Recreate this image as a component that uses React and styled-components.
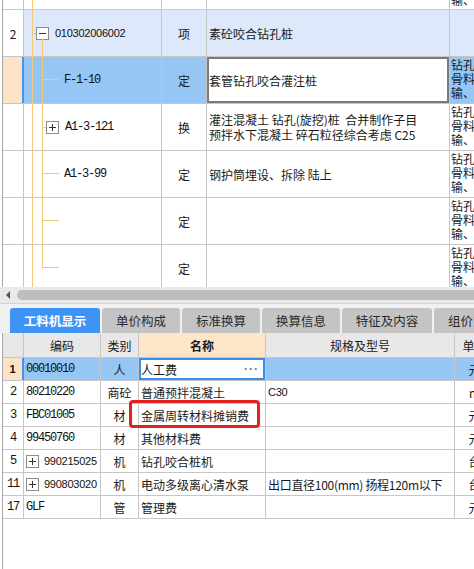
import React from 'react';
import styled, { createGlobalStyle } from 'styled-components';

const GRID = '#c6c6c6';
const SEL = '#96c6f4';
const GROUP = '#dde8fb';
const PEACH = '#fde3c6';
const TREE = '#f6c978';

const GlobalStyle = createGlobalStyle`
  html, body {
    margin: 0;
    padding: 0;
    background: #fff;
    overflow: hidden;
  }
  body {
    font-family: "Noto Sans CJK SC", "Liberation Sans", sans-serif;
    font-size: 12px;
    color: #1a1a1a;
  }
`;

const Page = styled.div`
  width: 474px;
  height: 569px;
  overflow: hidden;
  background: #fff;
`;

const TopGrid = styled.div`
  position: relative;
  height: 287px;
  overflow: hidden;
  margin-left: 2px;
  border-left: 1px solid #a8a8a8;
`;

const TopRow = styled.div`
  display: grid;
  grid-template-columns: 21px 138px 45px 243px 60px;
  height: ${(p) => p.$h}px;
  box-sizing: border-box;
  border-bottom: 1px solid ${GRID};
  background: ${(p) => p.$bg || '#fff'};
`;

const Cell = styled.div`
  box-sizing: border-box;
  border-right: ${(p) => (p.$mark ? `2px solid #4394f0` : `1px solid ${GRID}`)};
  display: flex;
  align-items: center;
  justify-content: ${(p) => p.$align || 'flex-start'};
  padding-left: ${(p) => p.$pad || 0}px;
  overflow: hidden;
  white-space: nowrap;
  letter-spacing: ${(p) => p.$tight || 0}px;
  background: ${(p) => p.$bg || 'transparent'};
  box-shadow: ${(p) => (p.$edit ? `inset 0 0 0 2px ${p.$edit}` : 'none')};
  font-weight: ${(p) => (p.$bold ? 700 : 400)};
`;

const Notes = styled.div`
  box-sizing: border-box;
  padding: ${(p) => (p.$clip ? '0' : '1px')} 0 0 1px;
  line-height: 14px;
  overflow: hidden;
  white-space: nowrap;
  & > div {
    margin-top: ${(p) => (p.$clip ? '-7px' : '0')};
  }
`;

const Wrap = styled.div`
  line-height: 15px;
  white-space: nowrap;
`;

const Code = styled.span`
  font-family: ${(p) => (p.$mono ? '"Liberation Mono", monospace' : '"Liberation Sans", sans-serif')};
  font-size: ${(p) => (p.$mono ? 12 : 11)}px;
  letter-spacing: ${(p) => (p.$mono ? '-1.2px' : '-0.25px')};
  color: #111;
`;

const Toggle = styled.span`
  box-sizing: border-box;
  position: relative;
  flex: none;
  width: 13px;
  height: 13px;
  margin-left: ${(p) => p.$at}px;
  margin-right: ${(p) => p.$gap ?? 6}px;
  border: 1px solid #8c8c8c;
  background: #fff;
  &::before,
  &::after {
    content: '';
    position: absolute;
    background: #333;
  }
  &::before {
    left: 2px;
    right: 2px;
    top: 5px;
    height: 1px;
  }
  &::after {
    display: ${(p) => (p.$plus ? 'block' : 'none')};
    top: 2px;
    bottom: 2px;
    left: 5px;
    width: 1px;
  }
`;

const TreeLines = styled.svg`
  position: absolute;
  left: -3px;
  top: 0;
  pointer-events: none;
`;

const HScroll = styled.div`
  height: 16px;
  display: flex;
  align-items: center;
  background: #e9e9e9;
  border-bottom: 1px solid #d2d2d2;
`;

const Arrow = styled.span`
  width: 0;
  height: 0;
  margin: 0 7px 0 6px;
  border-top: 4px solid transparent;
  border-bottom: 4px solid transparent;
  border-right: 4px solid #555;
`;

const Thumb = styled.div`
  flex: 1;
  height: 10px;
  background: #bdbdbd;
  border-radius: 5px 0 0 5px;
`;

const TabStrip = styled.div`
  display: flex;
  gap: 2px;
  padding: 4px 0 0 10px;
  height: 29px;
  box-sizing: border-box;
  background: #f1f1f1;
  white-space: nowrap;
`;

const Tab = styled.div`
  flex: none;
  width: ${(p) => p.$w}px;
  height: 25px;
  border-radius: 3px 3px 0 0;
  display: flex;
  align-items: center;
  justify-content: center;
  background: ${(p) => (p.$active ? '#3d94f5' : '#c4c4c4')};
  color: ${(p) => (p.$active ? '#fff' : '#2a2a2a')};
  font-weight: ${(p) => (p.$active ? 700 : 400)};
  font-size: 12.5px;
  overflow: hidden;
`;

const BottomGrid = styled.div`
  position: relative;
  height: 236px;
  margin-left: 2px;
  border-left: 1px solid #a8a8a8;
`;

const BRow = styled.div`
  display: grid;
  grid-template-columns: 21px 77px 38px 127px 189px 40px;
  height: ${(p) => (p.$head ? 25 : 23)}px;
  box-sizing: border-box;
  border-bottom: 1px solid ${GRID};
  background: ${(p) => (p.$head ? '#e8e8e8' : '#fff')};
`;

const Dots = styled.span`
  margin-left: auto;
  margin-right: 6px;
  color: #5a7fb0;
  font-family: "Liberation Sans", sans-serif;
  font-weight: 700;
  letter-spacing: 1px;
`;

const Callout = styled.div`
  position: absolute;
  left: 126px;
  top: 67px;
  width: 131px;
  height: 28px;
  box-sizing: border-box;
  border: 3px solid #e3211c;
  border-radius: 4px;
  pointer-events: none;
`;

const notes = ['钻孔咬合桩', '骨料运输', '输、拌和'];

const NoteText = () => (
  <div>
    {notes.map((n) => (
      <div key={n}>{n}</div>
    ))}
  </div>
);

const topRows = [
  { code: 'F-1-10', type: '定', name: '套管钻孔咬合灌注桩', leaf: true, selected: true },
  { code: 'A1-3-121', type: '换', plus: true, name: ['灌注混凝土 钻孔(旋挖)桩\u00a0\u00a0合并制作子目', '预拌水下混凝土 碎石粒径综合考虑 C25'] },
  { code: 'A1-3-99', type: '定', name: '钢护筒埋设、拆除 陆上', leaf: true },
  { code: '', type: '定', leaf: true },
  { code: '', type: '定', leaf: true },
];

const bottomRows = [
  { n: '1', code: '00010010', type: '人', name: '人工费', unit: '元', selected: true },
  { n: '2', code: '80210220', type: '商砼', name: '普通预拌混凝土', spec: 'C30', unit: 'm' },
  { n: '3', code: 'FBC01005', type: '材', name: '金属周转材料摊销费', unit: '元' },
  { n: '4', code: '99450760', type: '材', name: '其他材料费', unit: '元' },
  { n: '5', code: '990215025', plus: true, type: '机', name: '钻孔咬合桩机', unit: '台' },
  { n: '11', code: '990803020', plus: true, type: '机', name: '电动多级离心清水泵', spec: '出口直径100(mm) 扬程120m以下', unit: '台' },
  { n: '17', code: 'GLF', type: '管', name: '管理费', unit: '元' },
];

const tabs = [
  { label: '工料机显示', w: 90, active: true },
  { label: '单价构成', w: 78 },
  { label: '标准换算', w: 78 },
  { label: '换算信息', w: 78 },
  { label: '特征及内容', w: 90 },
  { label: '组价方案', w: 78 },
];

const branchYs = [79.5, 173.5, 220.5, 267.5];

export default function App() {
  return (
    <Page>
      <GlobalStyle />
      <TopGrid>
        <TopRow $h={10}>
          <Cell />
          <Cell />
          <Cell />
          <Cell />
          <Notes $clip>
            <div>
              <div>输、</div>
            </div>
          </Notes>
        </TopRow>
        <TopRow $h={47} $bg={GROUP}>
          <Cell $align="center" $bg="#fff">2</Cell>
          <Cell>
            <Toggle $at={12} />
            <Code>010302006002</Code>
          </Cell>
          <Cell $align="center">项</Cell>
          <Cell $pad={2}>素砼咬合钻孔桩</Cell>
          <Notes />
        </TopRow>
        {topRows.map((r, i) => (
          <TopRow key={i} $h={47} $bg={r.selected ? SEL : '#fff'}>
            <Cell $bg={r.selected ? PEACH : undefined} $mark={r.selected} />
            <Cell $pad={r.leaf ? 40 : 0}>
              {r.plus && <Toggle $at={22} $plus />}
              <Code $mono>{r.code}</Code>
            </Cell>
            <Cell $align="center">{r.type}</Cell>
            <Cell $pad={2} $bg={r.selected ? '#fff' : undefined} $edit={r.selected ? '#7b7b7b' : undefined}>
              {Array.isArray(r.name) ? (
                <Wrap>
                  {r.name.map((l) => (
                    <div key={l}>{l}</div>
                  ))}
                </Wrap>
              ) : (
                r.name
              )}
            </Cell>
            <Notes>
              <NoteText />
            </Notes>
          </TopRow>
        ))}
        <TreeLines width="474" height="287" viewBox="0 0 474 287">
          <g stroke={TREE} strokeWidth="1" fill="none" shapeRendering="crispEdges">
            <line x1="32.5" y1="0" x2="32.5" y2="287" />
            <line x1="32" y1="33.5" x2="36" y2="33.5" />
            <line x1="42.5" y1="39" x2="42.5" y2="268" />
            <line x1="42" y1="127.5" x2="46" y2="127.5" />
            {branchYs.map((y) => (
              <line key={y} x1="42" y1={y} x2="59" y2={y} />
            ))}
          </g>
        </TreeLines>
      </TopGrid>

      <HScroll>
        <Arrow />
        <Thumb />
      </HScroll>

      <TabStrip>
        {tabs.map((t) => (
          <Tab key={t.label} $w={t.w} $active={t.active}>
            {t.label}
          </Tab>
        ))}
      </TabStrip>

      <BottomGrid>
        <BRow $head>
          <Cell />
          <Cell $align="center">编码</Cell>
          <Cell $align="center">类别</Cell>
          <Cell $align="center" $bg="#fde5ca" $bold>名称</Cell>
          <Cell $align="center">规格及型号</Cell>
          <Cell $align="center">单价</Cell>
        </BRow>
        {bottomRows.map((r) => {
          const bg = r.selected ? SEL : undefined;
          return (
            <BRow key={r.n}>
              <Cell $align="center" $bg={r.selected ? PEACH : undefined} $mark={r.selected} $bold={r.selected}>
                <Code $mono={!r.selected}>{r.n}</Code>
              </Cell>
              <Cell $pad={2} $bg={bg}>
                {r.plus && <Toggle $at={0} $gap={5} $plus />}
                <Code $mono={!r.plus}>{r.code}</Code>
              </Cell>
              <Cell $align="center" $bg={bg}>{r.type}</Cell>
              <Cell $pad={2} $edit={r.selected ? '#3a8ee8' : undefined}>
                {r.name}
                {r.selected && <Dots>···</Dots>}
              </Cell>
              <Cell $pad={2} $bg={bg} $tight={-0.3}>
                {r.spec && /^[A-Z0-9]+$/.test(r.spec) ? <Code>{r.spec}</Code> : r.spec}
              </Cell>
              <Cell $align="center" $bg={bg}>{r.unit}</Cell>
            </BRow>
          );
        })}
        <Callout />
      </BottomGrid>
    </Page>
  );
}
